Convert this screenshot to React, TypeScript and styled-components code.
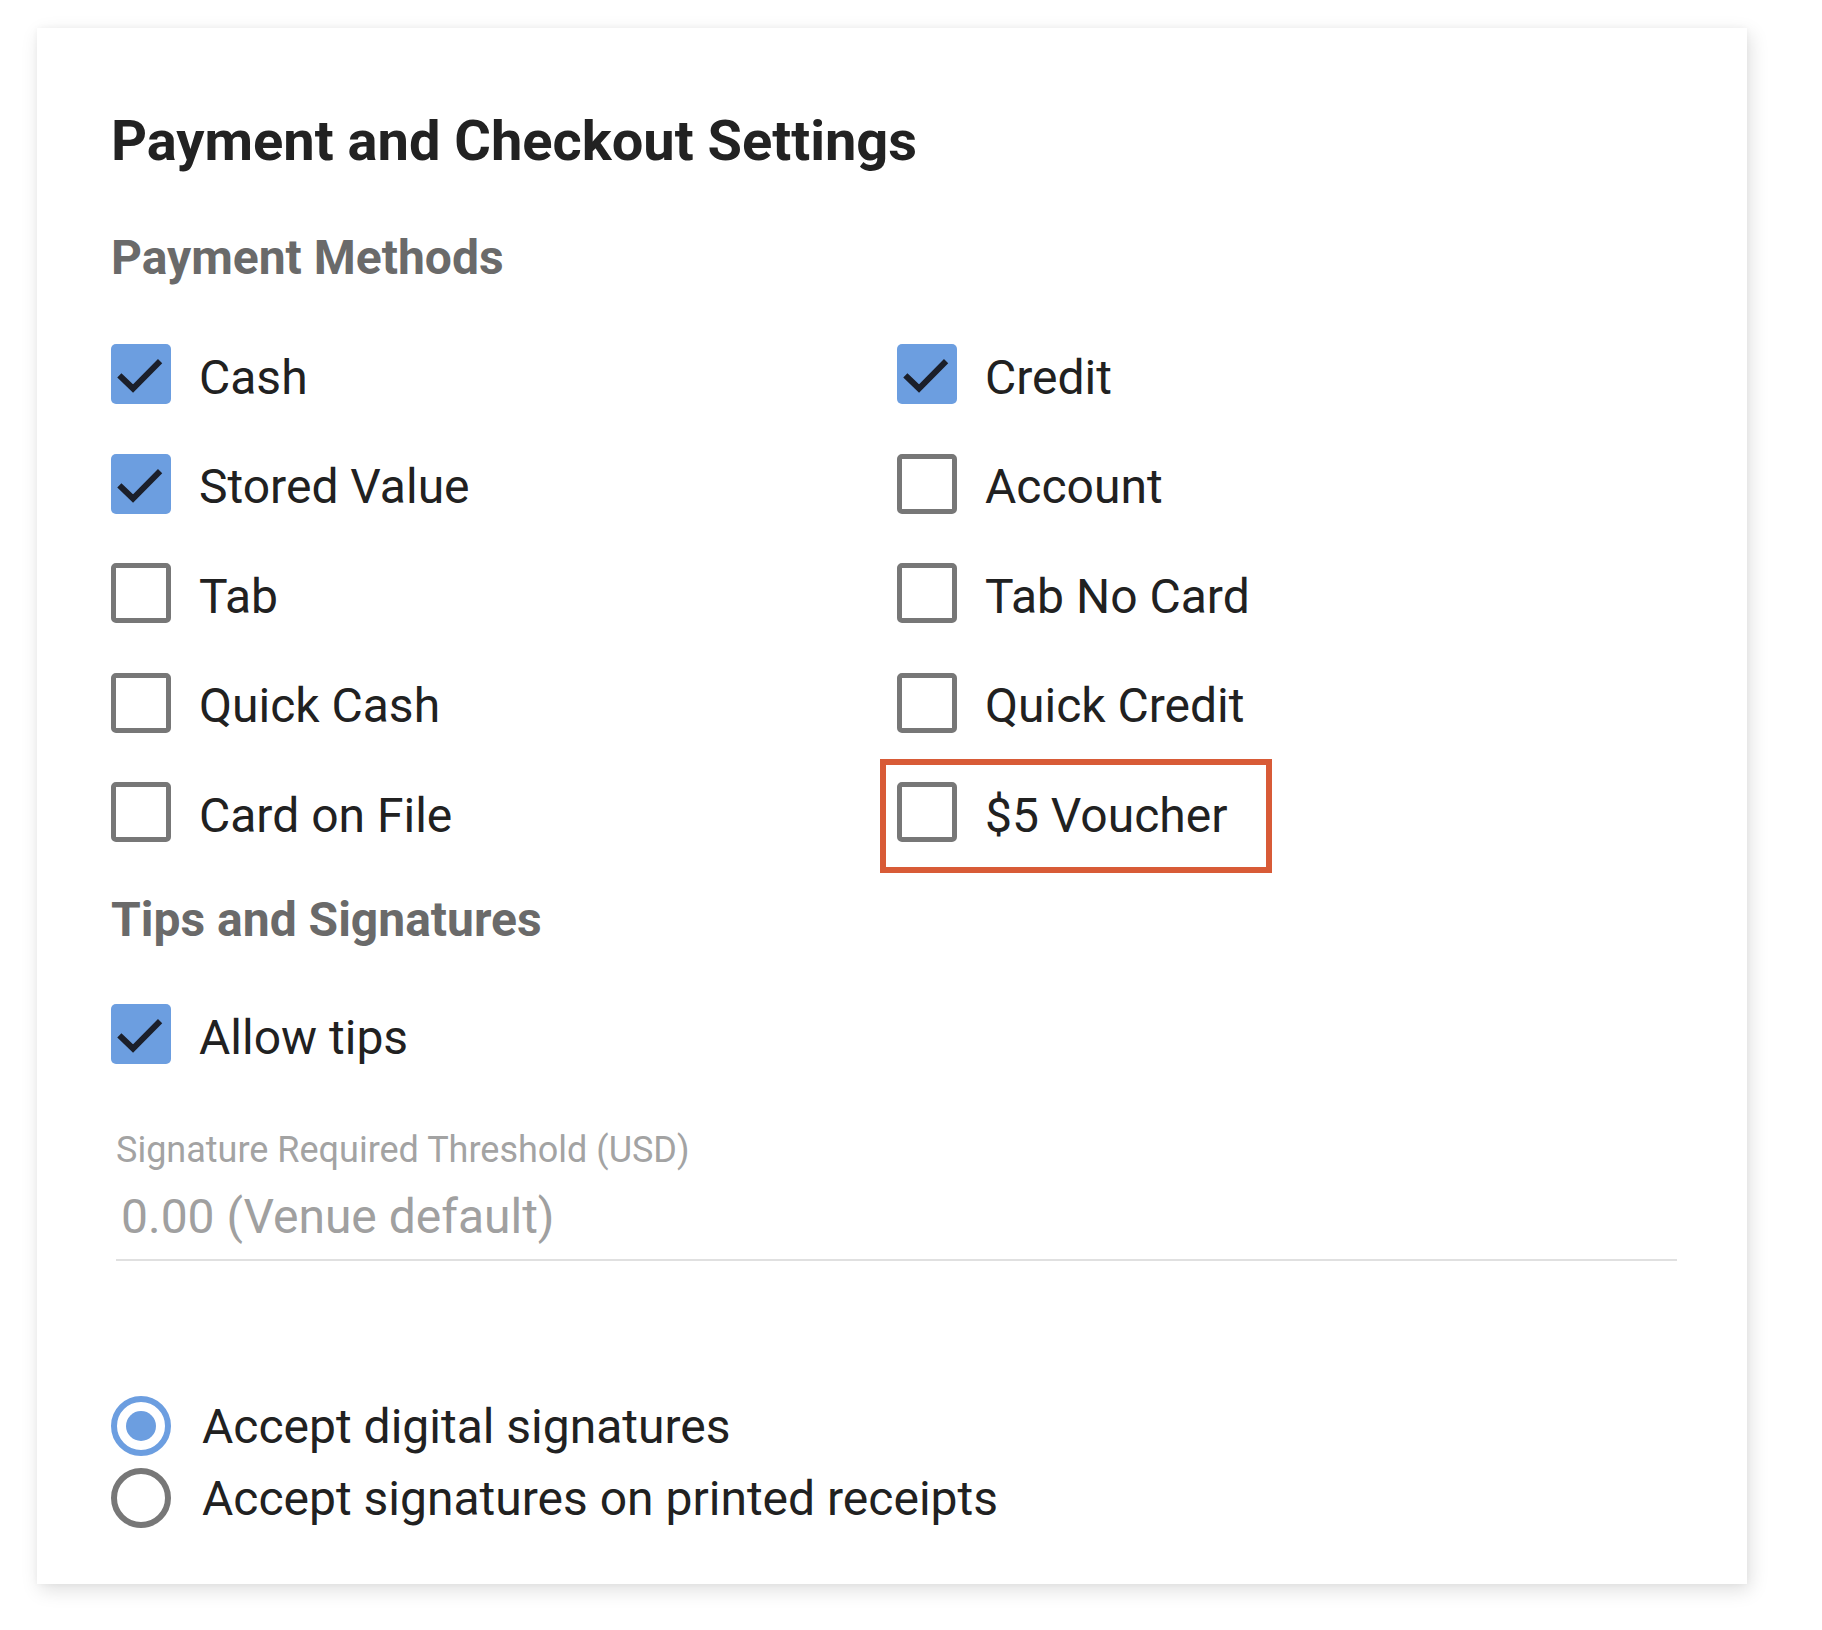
import React from "react";
import styled, { createGlobalStyle } from "styled-components";

const GlobalStyle = createGlobalStyle`
  html, body {
    margin: 0;
    padding: 0;
    background: #ffffff;
  }
  body {
    font-family: Roboto, "Liberation Sans", Arial, sans-serif;
    color: #212121;
  }
  *, *::before, *::after { box-sizing: border-box; }
`;

const Page = styled.div`
  padding: 28px 0 0 37px;
  width: 1822px;
  height: 1630px;
`;

const Card = styled.section`
  width: 1710px;
  height: 1556px;
  background: #ffffff;
  box-shadow: 3px 6px 18px rgba(0, 0, 0, 0.13), 0 0 6px rgba(0, 0, 0, 0.04);
  padding: 83px 70px 0 74px;
  display: flex;
  flex-direction: column;
`;

const Title = styled.h1`
  margin: 0;
  font-size: 56px;
  line-height: 60px;
  font-weight: 700;
  color: #222222;
`;

const SectionHeading = styled.h2<{ $top: number }>`
  margin: ${(p) => p.$top}px 0 0 0;
  font-size: 48px;
  line-height: 54px;
  font-weight: 700;
  color: #6a6a6a;
`;

const OptionGrid = styled.div`
  margin-top: 59px;
  display: grid;
  grid-template-columns: 786px 1fr;
  row-gap: 49.5px;
`;

const Option = styled.label<{ $highlight?: boolean }>`
  position: relative;
  display: inline-flex;
  align-items: center;
  gap: 28px;
  height: 60px;
  cursor: pointer;
  justify-self: start;

  ${(p) =>
    p.$highlight &&
    `
    &::after {
      content: "";
      position: absolute;
      left: -17px;
      top: -23px;
      width: 392px;
      height: 114px;
      border: 6px solid #d85b37;
      pointer-events: none;
    }
  `}
`;

const Box = styled.span<{ $checked: boolean }>`
  flex: none;
  width: 60px;
  height: 60px;
  border-radius: 5px;
  display: flex;
  align-items: center;
  justify-content: center;
  background: ${(p) => (p.$checked ? "#6c9ee0" : "#ffffff")};
  border: ${(p) => (p.$checked ? "none" : "5px solid #777777")};
`;

const OptionText = styled.span`
  font-size: 48px;
  line-height: 60px;
  margin-top: 7px;
  color: #212121;
  white-space: nowrap;
`;

const TipsRow = styled.div`
  margin-top: 57px;
`;

const Field = styled.div`
  margin: 61px 0 0 5px;
  display: flex;
  flex-direction: column;
  border-bottom: 2px solid #e0e0e0;
  padding-bottom: 14px;
`;

const FieldLabel = styled.span`
  font-size: 36px;
  line-height: 42px;
  color: #a3a3a3;
`;

const FieldValue = styled.span`
  margin-top: 18px;
  padding-left: 5px;
  font-size: 48px;
  line-height: 56px;
  color: #a0a0a0;
`;

const RadioGroup = styled.div`
  margin-top: 135px;
  display: flex;
  flex-direction: column;
  gap: 12px;
`;

const RadioOption = styled.label`
  display: flex;
  align-items: center;
  gap: 31px;
  height: 60px;
`;

const RadioCircle = styled.span<{ $selected: boolean }>`
  flex: none;
  width: 60px;
  height: 60px;
  border-radius: 50%;
  border: 6px solid ${(p) => (p.$selected ? "#6c9ee0" : "#777777")};
  display: flex;
  align-items: center;
  justify-content: center;

  &::before {
    content: "";
    display: ${(p) => (p.$selected ? "block" : "none")};
    width: 30px;
    height: 30px;
    border-radius: 50%;
    background: #6c9ee0;
  }
`;

const RadioText = styled.span`
  font-size: 48px;
  line-height: 60px;
  margin-top: 1px;
  color: #212121;
  white-space: nowrap;
`;

const CheckMark = () => (
  <svg width="60" height="60" viewBox="0 0 24 24" aria-hidden="true">
    <path
      d="M4.2 13.4 L8.8 17.8 L18.8 7.7"
      fill="none"
      stroke="#1b1f2a"
      strokeWidth="2.4"
      strokeLinecap="square"
      strokeLinejoin="miter"
    />
  </svg>
);

type Item = { label: string; checked: boolean; highlight?: boolean };

const methods: Item[] = [
  { label: "Cash", checked: true },
  { label: "Credit", checked: true },
  { label: "Stored Value", checked: true },
  { label: "Account", checked: false },
  { label: "Tab", checked: false },
  { label: "Tab No Card", checked: false },
  { label: "Quick Cash", checked: false },
  { label: "Quick Credit", checked: false },
  { label: "Card on File", checked: false },
  { label: "$5 Voucher", checked: false, highlight: true },
];

const CheckOption = ({ item }: { item: Item }) => (
  <Option $highlight={item.highlight}>
    <Box $checked={item.checked}>{item.checked && <CheckMark />}</Box>
    <OptionText>{item.label}</OptionText>
  </Option>
);

export default function App() {
  return (
    <>
      <GlobalStyle />
      <Page>
        <Card>
          <Title>Payment and Checkout Settings</Title>
          <SectionHeading $top={60}>Payment Methods</SectionHeading>
          <OptionGrid>
            {methods.map((m) => (
              <CheckOption key={m.label} item={m} />
            ))}
          </OptionGrid>
          <SectionHeading $top={51}>Tips and Signatures</SectionHeading>
          <TipsRow>
            <CheckOption item={{ label: "Allow tips", checked: true }} />
          </TipsRow>
          <Field>
            <FieldLabel>Signature Required Threshold (USD)</FieldLabel>
            <FieldValue>0.00 (Venue default)</FieldValue>
          </Field>
          <RadioGroup>
            <RadioOption>
              <RadioCircle $selected />
              <RadioText>Accept digital signatures</RadioText>
            </RadioOption>
            <RadioOption>
              <RadioCircle $selected={false} />
              <RadioText>Accept signatures on printed receipts</RadioText>
            </RadioOption>
          </RadioGroup>
        </Card>
      </Page>
    </>
  );
}
